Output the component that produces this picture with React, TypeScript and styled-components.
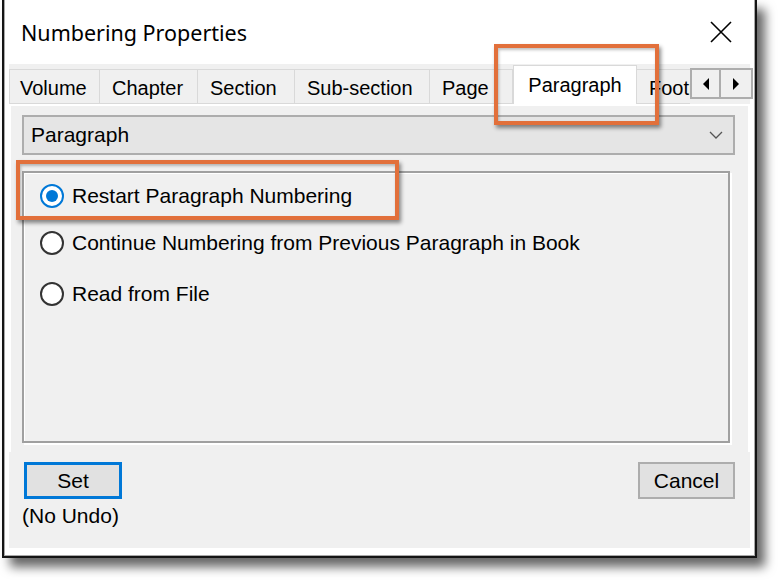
import React from "react";
import styled, { createGlobalStyle } from "styled-components";

const Global = createGlobalStyle`
  html, body { margin: 0; padding: 0; background: #ffffff; }
  body { font-family: "Liberation Sans", Arial, sans-serif; }
`;

const Page = styled.div`
  position: relative;
  width: 778px;
  height: 580px;
  overflow: hidden;
  background: #ffffff;
`;

const Frame = styled.div`
  margin-left: 2px;
  width: 755px;
  height: 558px;
  box-sizing: border-box;
  border: 2px solid #141414;
  border-top: none;
  box-shadow: 8px 9px 10px rgba(0, 0, 0, 0.6);
  display: flex;
`;

const Window = styled.div`
  flex: 1;
  min-width: 0;
  display: flex;
  flex-direction: column;
  background: #ffffff;
  border: 1px solid #a8a8a8;
  border-top: none;
  padding: 0 4px 7px 4px;
`;

const TitleBar = styled.div`
  height: 64px;
  display: flex;
  align-items: center;
  justify-content: space-between;
  padding: 0 18px 0 12px;
  flex-shrink: 0;
`;

const Title = styled.span`
  font-family: "Noto Sans", "Open Sans", sans-serif;
  font-size: 21.5px;
  color: #000;
`;

const Close = styled.div`
  width: 22px;
  height: 22px;
  display: flex;
  margin-top: -1px;
`;

const Client = styled.div`
  flex: 1;
  min-width: 0;
  background: #f0f0f0;
  display: flex;
  flex-direction: column;
  min-height: 0;
`;

const TabStrip = styled.div`
  display: flex;
  align-items: flex-end;
  height: 39px;
  margin-top: 1px;
  margin-right: -3px;
  position: relative;
  z-index: 2;
`;

const Tabs = styled.div`
  flex: 1;
  min-width: 0;
  display: flex;
  align-items: flex-end;
  overflow: hidden;
  height: 100%;
`;

const Tab = styled.div<{ $w: number; $active?: boolean }>`
  flex-shrink: 0;
  width: ${(p) => p.$w}px;
  height: ${(p) => (p.$active ? 41 : 35)}px;
  margin-bottom: ${(p) => (p.$active ? -2 : 0)}px;
  box-sizing: border-box;
  border: 1px solid #d9d9d9;
  border-bottom: ${(p) => (p.$active ? "none" : "1px solid #d9d9d9")};
  border-left: ${(p) => (p.$active ? "1px solid #d9d9d9" : "none")};
  background: ${(p) => (p.$active ? "#ffffff" : "#f0f0f0")};
  display: flex;
  align-items: ${(p) => (p.$active ? "flex-start" : "center")};
  justify-content: ${(p) => (p.$active ? "center" : "flex-start")};
  padding-left: ${(p) => (p.$active ? 0 : 12)}px;
  padding-top: ${(p) => (p.$active ? 8 : 3)}px;
  font-size: 20px;
  color: #000;
  white-space: nowrap;
  overflow: hidden;
  &:first-child { border-left: 1px solid #d9d9d9; padding-left: 10px; }
`;

const Arrows = styled.div`
  display: flex;
  height: 31px;
  margin-bottom: 5px;
  flex-shrink: 0;
`;

const ArrowBtn = styled.div`
  width: 31px;
  height: 31px;
  box-sizing: border-box;
  border: 2px solid #adadad;
  background: #f0f0f0;
  display: flex;
  align-items: center;
  justify-content: center;
  & + & { border-left: none; width: 32px; }
`;

const TabPage = styled.div`
  position: relative;
  z-index: 1;
  border-top: 2px solid #ffffff;
  border-left: 2px solid #ffffff;
  border-right: 2px solid #ffffff;
  background: #f0f0f0;
  padding: 9px 13px 9px 11px;
  display: flex;
  flex-direction: column;
`;

const Select = styled.div`
  height: 40px;
  box-sizing: border-box;
  border: 2px solid #adadad;
  background: #e5e5e5;
  display: flex;
  align-items: center;
  justify-content: space-between;
  padding: 0 10px 0 7px;
  font-size: 21px;
  color: #000;
`;

const Group = styled.div`
  margin-top: 16px;
  margin-right: 5px;
  height: 272px;
  box-sizing: border-box;
  border: 2px solid #a0a0a0;
  box-shadow: 2px 2px 0 #ffffff, inset 1px 1px 0 #ffffff;
  display: flex;
  flex-direction: column;
  padding: 0 0 0 16px;
`;

const RadioRow = styled.div<{ $h: number }>`
  height: ${(p) => p.$h}px;
  display: flex;
  align-items: center;
  gap: 8px;
  font-size: 21px;
  color: #000;
`;

const RadioCircle = styled.div<{ $on?: boolean }>`
  width: 24px;
  height: 24px;
  box-sizing: border-box;
  border-radius: 50%;
  border: 2px solid ${(p) => (p.$on ? "#0078d7" : "#333333")};
  background: #ffffff;
  display: flex;
  align-items: center;
  justify-content: center;
  &::after {
    content: "";
    width: 12px;
    height: 12px;
    border-radius: 50%;
    background: ${(p) => (p.$on ? "#0078d7" : "transparent")};
  }
`;

const Footer = styled.div`
  margin-top: 10px;
  padding: 0 15px;
  display: flex;
  justify-content: space-between;
  align-items: flex-start;
`;

const LeftCol = styled.div`
  display: flex;
  flex-direction: column;
`;

const Button = styled.div<{ $default?: boolean }>`
  width: ${(p) => (p.$default ? 98 : 97)}px;
  height: 37px;
  box-sizing: border-box;
  border: ${(p) => (p.$default ? "3px solid #0078d7" : "2px solid #adadad")};
  background: #e1e1e1;
  display: flex;
  align-items: center;
  justify-content: center;
  font-size: 21px;
  color: #000;
`;

const Note = styled.div`
  margin-top: 5px;
  margin-left: -2px;
  font-size: 21px;
  color: #000;
`;

const Highlight = styled.div<{ $x: number; $y: number; $w: number; $h: number }>`
  position: absolute;
  left: ${(p) => p.$x}px;
  top: ${(p) => p.$y}px;
  width: ${(p) => p.$w}px;
  height: ${(p) => p.$h}px;
  box-sizing: border-box;
  border: 4px solid #e2703b;
  box-shadow: 2px 3px 4px rgba(0, 0, 0, 0.45), inset 1px 2px 3px rgba(0, 0, 0, 0.25);
  pointer-events: none;
  z-index: 10;
`;

const tabs = [
  { label: "Volume", w: 91 },
  { label: "Chapter", w: 98 },
  { label: "Section", w: 97 },
  { label: "Sub-section", w: 135 },
  { label: "Page", w: 83 },
  { label: "Paragraph", w: 124, active: true },
  { label: "Footnote", w: 90 },
];

const radios = [
  { label: "Restart Paragraph Numbering", on: true, h: 46 },
  { label: "Continue Numbering from Previous Paragraph in Book", h: 48 },
  { label: "Read from File", h: 54 },
];

export default function App() {
  return (
    <Page>
      <Global />
      <Frame>
        <Window>
          <TitleBar>
            <Title>Numbering Properties</Title>
            <Close>
              <svg width="22" height="22" viewBox="0 0 22 22">
                <path d="M1 1 L21 21 M21 1 L1 21" stroke="#000" strokeWidth="1.6" fill="none" />
              </svg>
            </Close>
          </TitleBar>
          <Client>
            <TabStrip>
              <Tabs>
                {tabs.map((t) => (
                  <Tab key={t.label} $w={t.w} $active={t.active}>
                    {t.label}
                  </Tab>
                ))}
              </Tabs>
              <Arrows>
                <ArrowBtn>
                  <svg width="8" height="12" viewBox="0 0 8 12">
                    <path d="M7 0 L1 6 L7 12 Z" fill="#000" />
                  </svg>
                </ArrowBtn>
                <ArrowBtn>
                  <svg width="8" height="12" viewBox="0 0 8 12">
                    <path d="M1 0 L7 6 L1 12 Z" fill="#000" />
                  </svg>
                </ArrowBtn>
              </Arrows>
            </TabStrip>
            <TabPage>
              <Select>
                <span>Paragraph</span>
                <svg width="14" height="8" viewBox="0 0 14 8">
                  <path d="M1 1 L7 7 L13 1" stroke="#555" strokeWidth="1.3" fill="none" />
                </svg>
              </Select>
              <Group>
                {radios.map((r) => (
                  <RadioRow key={r.label} $h={r.h}>
                    <RadioCircle $on={r.on} />
                    <span>{r.label}</span>
                  </RadioRow>
                ))}
              </Group>
            </TabPage>
            <Footer>
              <LeftCol>
                <Button $default>Set</Button>
                <Note>(No Undo)</Note>
              </LeftCol>
              <Button>Cancel</Button>
            </Footer>
          </Client>
        </Window>
      </Frame>
      <Highlight $x={494} $y={44} $w={165} $h={81} />
      <Highlight $x={16} $y={160} $w={383} $h={60} />
    </Page>
  );
}
